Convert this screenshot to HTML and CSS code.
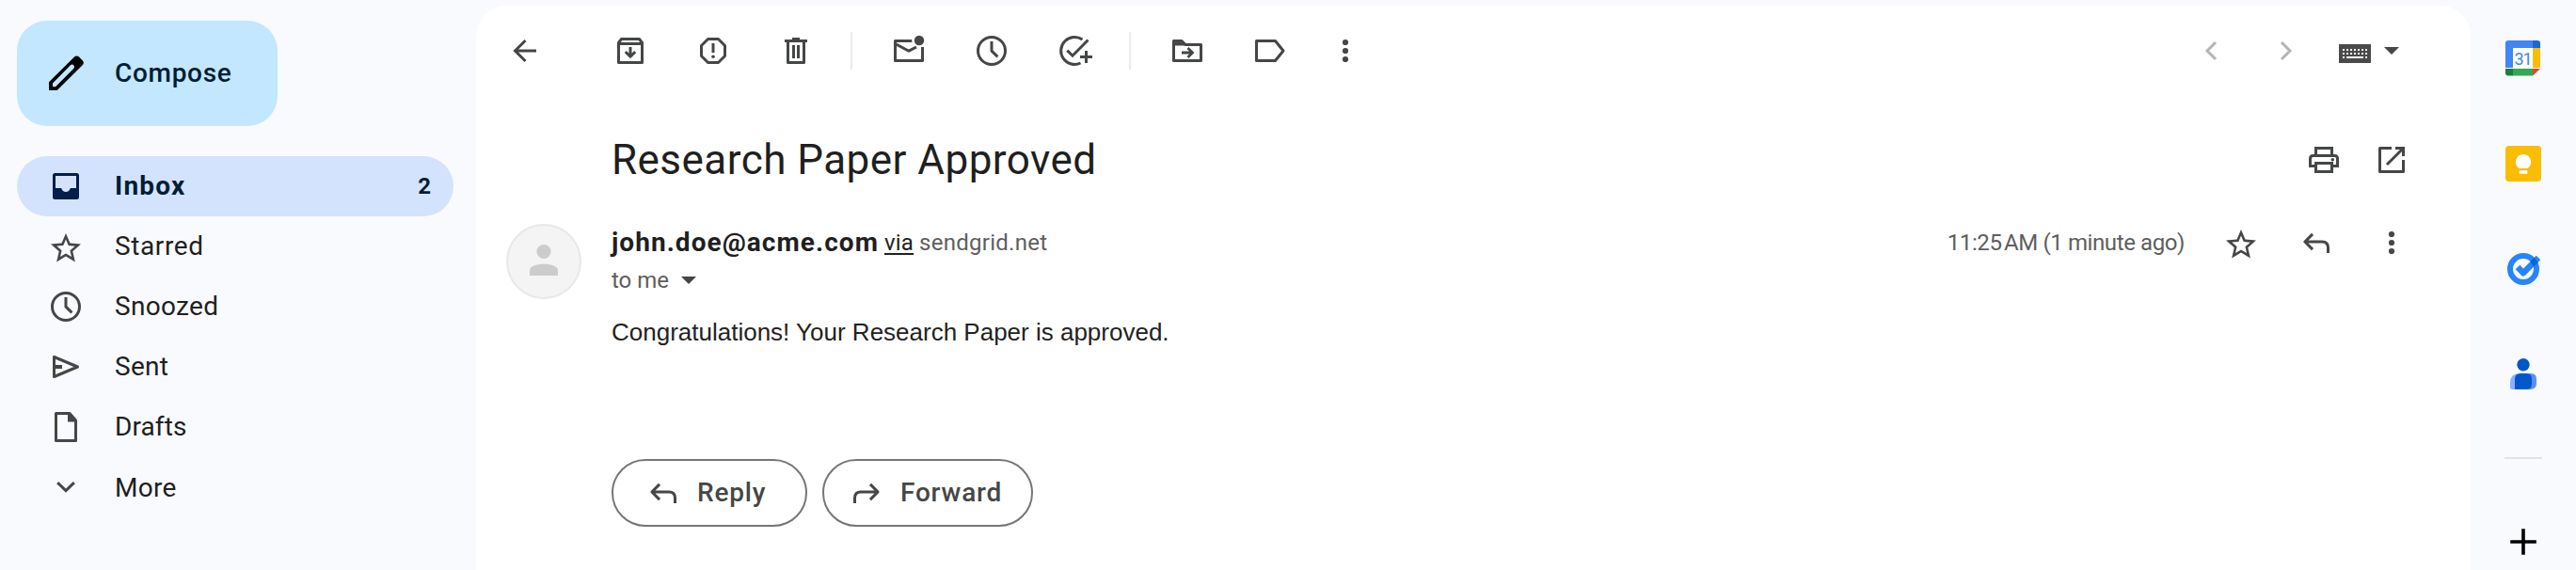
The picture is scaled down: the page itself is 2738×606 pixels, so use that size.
FILE: index.html
```html
<!DOCTYPE html>
<html lang="en">
<head>
<meta charset="utf-8">
<title>Research Paper Approved</title>
<link rel="stylesheet" href="styles.css">
</head>
<body>
<svg class="defs" aria-hidden="true">
  <symbol id="clock" viewBox="0 0 40 40"><circle cx="20" cy="20" r="14.5"/><path d="M20 10v10.2l6.4 6.2"/></symbol>
  <symbol id="star" viewBox="0 0 40 40"><path class="solid" transform="translate(.8 2.8) scale(1.6)" d="M22 9.24l-7.19-.62L12 2 9.19 8.63 2 9.24l5.46 4.73L5.82 21 12 17.27 18.18 21l-1.63-7.03L22 9.24zM12 15.4l-3.76 2.27 1-4.28-3.32-2.88 4.38-.38L12 6.1l1.71 4.04 4.38.38-3.32 2.88 1 4.28L12 15.4z"/></symbol>
  <symbol id="dots" viewBox="0 0 40 40"><g class="solid"><circle cx="20" cy="11" r="3.1"/><circle cx="20" cy="20" r="3.1"/><circle cx="20" cy="29" r="3.1"/></g></symbol>
  <symbol id="reply" viewBox="0 0 40 40"><path d="M7.6 19H26q6.5 0 6.5 6.5V31M16 10.9L7.9 19l8.1 8.1"/></symbol>
  <symbol id="caret" viewBox="0 0 16 8"><path class="solid" d="M0 0h16L8 8z"/></symbol>
</svg>

<nav class="sidebar">
  <button class="compose">
    <svg class="icon pencil" viewBox="0 0 40 40"><path class="solid" fill-rule="evenodd" d="M2 38v-8.8L29 2.5q2.5-2.2 5 0l3.700 3.800q2.300 2.500 0 5L10.700 38zM6 34.300h3L28.700 14.500q.9-1.900-.5-3.200-1.300-1.300-3-.300L6 30.500z"/></svg>
    <span>Compose</span>
  </button>
  <ul class="folders">
    <li class="folder active"><svg class="icon" viewBox="0 0 40 40"><path class="solid" fill-rule="evenodd" d="M8.500 6h23Q34 6 34 8.500v23q0 2.500-2.500 2.500h-23Q6 34 6 31.500v-23Q6 6 8.500 6zM9 9v13h6.200q1.200 4 4.800 4t4.800-4H31V9z"/></svg><span class="inbox">Inbox</span><span class="count">2</span></li>
    <li class="folder"><svg class="icon"><use href="#star"/></svg><span class="starred">Starred</span></li>
    <li class="folder"><svg class="icon"><use href="#clock"/></svg><span>Snoozed</span></li>
    <li class="folder"><svg class="icon sent" viewBox="0 0 40 40"><path d="M7.500 9.500v21l25-10.500z"/><path d="M7 20h9" stroke-width="4"/></svg><span>Sent</span></li>
    <li class="folder"><svg class="icon" viewBox="0 0 40 40"><path d="M9.500 5.500H24l6.500 7.500v21.500h-21z"/><path class="solid" d="M22 5h3l6 7v2.500h-9z"/></svg><span class="drafts">Drafts</span></li>
    <li class="folder more"><svg class="icon" viewBox="0 0 40 40"><path stroke-linejoin="miter" d="M11.200 15.200l8.800 8.500 8.800-8.500"/></svg><span>More</span></li>
  </ul>
</nav>

<main class="mail">
  <div class="toolbar">
    <svg class="icon back" viewBox="0 0 40 40"><path stroke-linejoin="miter" d="M9.500 20H32M20.500 9L9.500 20l11 11"/></svg>
    <svg class="icon" viewBox="0 0 40 40"><path d="M7.500 11.500l3-4h19l3 4v21h-25z"/><path d="M7 12.500h26M20 16v10M14.800 21l5.200 5.200 5.200-5.200"/></svg>
    <svg class="icon" viewBox="0 0 40 40"><path d="M14.500 7.500h11l7 7v11l-7 7h-11l-7-7v-11z"/><path d="M20 12v10"/><circle class="solid" cx="20" cy="26.200" r="1.800"/></svg>
    <svg class="icon" viewBox="0 0 40 40"><path d="M11.500 10v22.500h17V10"/><path d="M8 9.500h24M16 7.500h8M17.500 14v14M22.500 14v14"/></svg>
    <i class="rule"></i>
    <svg class="icon" viewBox="0 0 40 40"><path d="M23.300 9.500H5.500v21h29V16"/><path d="M5.500 12.500L20 20.200l8-4.200"/><circle class="solid" cx="31" cy="9" r="5.200"/></svg>
    <svg class="icon"><use href="#clock"/></svg>
    <svg class="icon" viewBox="0 0 40 40"><path d="M28.500 8.100A14.500 14.500 0 1 0 26.500 33"/><path stroke-linejoin="miter" d="M12.300 19.600l5.700 5.600L34.500 8.500M32.500 20v13M26 26.500h13"/></svg>
    <i class="rule"></i>
    <svg class="icon" viewBox="0 0 40 40"><path d="M5.500 9.500H14l4 4h16.500v17h-29z"/><path class="solid" d="M5 9h10l4.500 5.500H5z"/><path d="M14 22h10.500M20.500 17l5 5-5 5" stroke-linejoin="miter" stroke-width="2.800"/></svg>
    <svg class="icon" viewBox="0 0 40 40"><path d="M5.500 9.500h20L34 20l-8.500 10.500h-20z"/></svg>
    <svg class="icon last"><use href="#dots"/></svg>
    <div class="pager">
      <svg class="icon faded" viewBox="0 0 40 40"><path stroke-linejoin="miter" d="M25 11l-9 9 9 9"/></svg>
      <svg class="icon faded" viewBox="0 0 40 40"><path stroke-linejoin="miter" d="M15 11l9 9-9 9"/></svg>
      <svg class="keyboard" viewBox="0 0 34 20"><path class="solid" d="M0 0h34v20H0z"/><g class="keys"><path stroke-dasharray="2 2" d="M4 6h26M4 10h26"/><path d="M4 14h2M8 14h18M28 14h2"/></g></svg>
      <svg class="caret"><use href="#caret"/></svg>
    </div>
  </div>

  <header class="subject">
    <h1>Research Paper Approved</h1>
    <svg class="icon" viewBox="0 0 40 40"><g stroke-linejoin="miter"><path d="M11.500 15V7.500h17V15"/><path d="M10 26.500H5.500v-8q0-3 3-3h23q3 0 3 3v8H30"/><path d="M11.500 23.500h17v9h-17z"/></g><circle class="solid" cx="29.300" cy="19.700" r="1.800"/></svg>
    <svg class="icon" viewBox="0 0 40 40"><path d="M20 7.500H7.500v25h25V20"/><path stroke-linejoin="miter" d="M24 7.500h8.500V16M31.500 8.500L15 25"/></svg>
  </header>

  <article class="message">
    <svg class="avatar" viewBox="0 0 80 80"><circle class="disc" cx="40" cy="40" r="39"/><circle class="person" cx="40" cy="29.500" r="7.600"/><path class="person" d="M25 55v-5q0-4 5-5.700 10-3.400 20 0 5 1.700 5 5.700v5z"/></svg>
    <div class="content">
      <div class="meta">
        <b class="sender">john.doe@acme.com</b><a class="via">via</a><span class="relay">sendgrid.net</span>
        <time>11:25&#8239;AM (1 minute ago)</time>
        <svg class="icon"><use href="#star"/></svg>
        <svg class="icon"><use href="#reply"/></svg>
        <svg class="icon"><use href="#dots"/></svg>
      </div>
      <div class="to"><span>to me</span><svg class="caret"><use href="#caret"/></svg></div>
      <p class="text">Congratulations! Your Research Paper is approved.</p>
      <div class="actions">
        <button class="pill reply"><svg class="icon"><use href="#reply"/></svg><span>Reply</span></button>
        <button class="pill forward"><svg class="icon flip"><use href="#reply"/></svg><span>Forward</span></button>
      </div>
    </div>
  </article>
</main>

<aside class="rail">
  <svg class="app" viewBox="0 0 40 40"><path fill="#fff" d="M8 8h22v22H8z"/><path fill="#4285f4" d="M4 1h26v8H9v21H1V4q0-3 3-3z"/><path fill="#1967d2" d="M30 1h5q3 0 3 3v5h-8z"/><path fill="#fbbc04" d="M30 9h8v21h-8z"/><path fill="#34a853" d="M9 31h21v7.500H9z"/><path fill="#188038" d="M1 31h8v7.500H4q-3 0-3-3z"/><path fill="#ea4335" d="M30 31h8l-8 7.500z"/><text x="19.600" y="26.600">31</text></svg>
  <svg class="app" viewBox="0 0 40 40"><rect x="1" y="1" width="38" height="38" rx="4" fill="#fbbc04"/><path fill="#fff" d="M20 10a8.200 8.200 0 0 1 5 14.600V25H15v-.400A8.200 8.200 0 0 1 20 10zM15.800 27.300h8.500v3.500h-8.500z"/></svg>
  <svg class="app" viewBox="0 0 40 40"><circle cx="20" cy="20" r="14" fill="none" stroke="#2684fc" stroke-width="6"/><path d="M14 18l6 6.200L36 8" fill="none" stroke="#2684fc" stroke-width="6.500" stroke-linejoin="round"/><path fill="#0066da" d="M27.500 12l4-4 4 5-4.700 4.500z"/></svg>
  <svg class="app" viewBox="0 0 40 40"><circle cx="20" cy="9.800" r="6.700" fill="#0057cc"/><path fill="#8ab0ff" d="M16 19h6v17H8q-2 0-2-2v-5q0-10 10-10z"/><path fill="#5b8dff" d="M20 19h8q6 0 6 6v4.500q0 6.500-6.500 6.500H20z"/><path fill="#0057cc" d="M17 19h6q6 0 6 6v5q0 6-6 6H11V25q0-6 6-6z"/></svg>
  <hr>
  <svg class="app plus" viewBox="0 0 40 40"><path d="M20 6.200v27.600M6.200 20h27.600"/></svg>
</aside>
</body>
</html>
```
FILE: styles.css
```css
* { box-sizing: border-box; }
body {
  margin: 0;
  height: 606px;
  display: flex;
  overflow: hidden;
  background: #f8fafd;
  color: #1f1f1f;
  font: 400 28px/40px Roboto, sans-serif;
}
.defs { display: none; }
button { font: inherit; color: inherit; border: 0; background: none; padding: 0; }
h1, p, ul { margin: 0; padding: 0; }

.icon {
  width: 40px;
  height: 40px;
  flex: none;
  overflow: visible;
  color: #444746;
  fill: none;
  stroke: currentColor;
  stroke-width: 3;
  stroke-linejoin: round;
}
.solid { fill: currentColor; stroke: none; }
.caret { width: 16px; height: 8px; color: #444746; }

/* Sidebar */
.sidebar { width: 506px; padding: 22px 24px 0 18px; flex: none; }
.compose {
  width: 277px;
  height: 112px;
  padding-left: 32px;
  display: flex;
  align-items: center;
  gap: 32px;
  border-radius: 32px;
  background: #c2e7ff;
  color: #001d35;
  font-weight: 500;
  letter-spacing: .7px;
}
.pencil { color: #000; }
.folders { list-style: none; margin-top: 32px; }
.folder {
  height: 64px;
  padding: 0 24px 0 32px;
  display: flex;
  align-items: center;
  gap: 32px;
  letter-spacing: .3px;
}
.active {
  border-radius: 32px;
  background: #d3e3fd;
  color: #001d35;
  font-weight: 700;
}
.active .icon { color: #041e49; }
.inbox { letter-spacing: 1.2px; }
.starred { letter-spacing: .6px; }
.drafts { letter-spacing: .1px; }
.more span { padding-top: 2px; }
.count { margin-left: auto; font-size: 24px; letter-spacing: 0; }
.sent { filter: blur(.6px); }

/* Mail panel */
.mail {
  flex: 1;
  margin-top: 6px;
  border-radius: 32px 32px 0 0;
  background: #fff;
}
.toolbar {
  height: 96px;
  padding: 0 76px 0 32px;
  display: flex;
  align-items: center;
  gap: 48px;
}
.back { margin-right: 24px; }
.last { margin-left: -8px; }
.rule { width: 2px; height: 40px; margin: 0 -8px 0 -10px; background: #ebebeb; }
.pager { margin-left: auto; display: flex; align-items: center; }
.faded { color: #b4b5b5; margin-right: 40px; }
.faded + .faded { margin-right: 36px; }
.keyboard { width: 34px; height: 20px; margin: 6px 14px 0 0; color: #4a4a4a; }
.keys { stroke: #fff; stroke-width: 2; }

.subject {
  height: 136px;
  padding: 0 64px 0 144px;
  display: flex;
  align-items: center;
  gap: 32px;
}
.subject h1 {
  margin-right: auto;
  font-size: 44px;
  font-weight: 400;
  line-height: 56px;
  letter-spacing: .46px;
}

.message { display: flex; gap: 32px; padding: 0 64px 0 32px; }
.avatar { width: 80px; height: 80px; flex: none; }
.disc { fill: #f4f4f4; stroke: #e8e8e8; stroke-width: 2; }
.person { fill: #ccc; }
.content { flex: 1; }
.meta { height: 40px; display: flex; align-items: center; font-size: 24px; color: #5e5e5e; }
.meta .icon + .icon { margin-left: 40px; }
.sender { font-size: 28px; line-height: 38px; color: #1f1f1f; letter-spacing: 1.05px; }
.via {
  margin: 0 6px 0 6px;
  color: #222;
  letter-spacing: .2px;
  text-decoration: underline;
  text-decoration-thickness: 2px;
  text-underline-offset: 3px;
}
.relay { letter-spacing: .26px; }
.meta time { margin: 0 40px 0 auto; letter-spacing: -.4px; }
.to { height: 40px; display: flex; align-items: center; gap: 13px; font-size: 24px; color: #5e5e5e; }
.text { margin-top: 15px; font: 26px/40px "Liberation Sans", Arial, sans-serif; color: #222; }

.actions { display: flex; gap: 16px; margin-top: 115px; }
.pill {
  height: 72px;
  display: flex;
  align-items: center;
  gap: 16px;
  border: 2px solid #747775;
  border-radius: 36px;
  color: #444746;
  font-weight: 500;
  letter-spacing: .8px;
}
.reply { width: 208px; padding-left: 33px; }
.forward { width: 224px; padding-left: 25px; }
.flip { transform: scaleX(-1); }

/* Side panel */
.rail {
  width: 112px;
  flex: none;
  padding-top: 42px;
  display: flex;
  flex-direction: column;
  align-items: center;
  gap: 72px;
}
.app { width: 40px; height: 40px; flex: none; }
.app text { font: 400 18px Roboto, sans-serif; fill: #4285f4; text-anchor: middle; letter-spacing: -1px; }
.rail hr { width: 40px; height: 2px; margin: -4px 0; border: 0; background: #e1e3e1; flex: none; }
.plus { stroke: #000; stroke-width: 3.6; }
```
